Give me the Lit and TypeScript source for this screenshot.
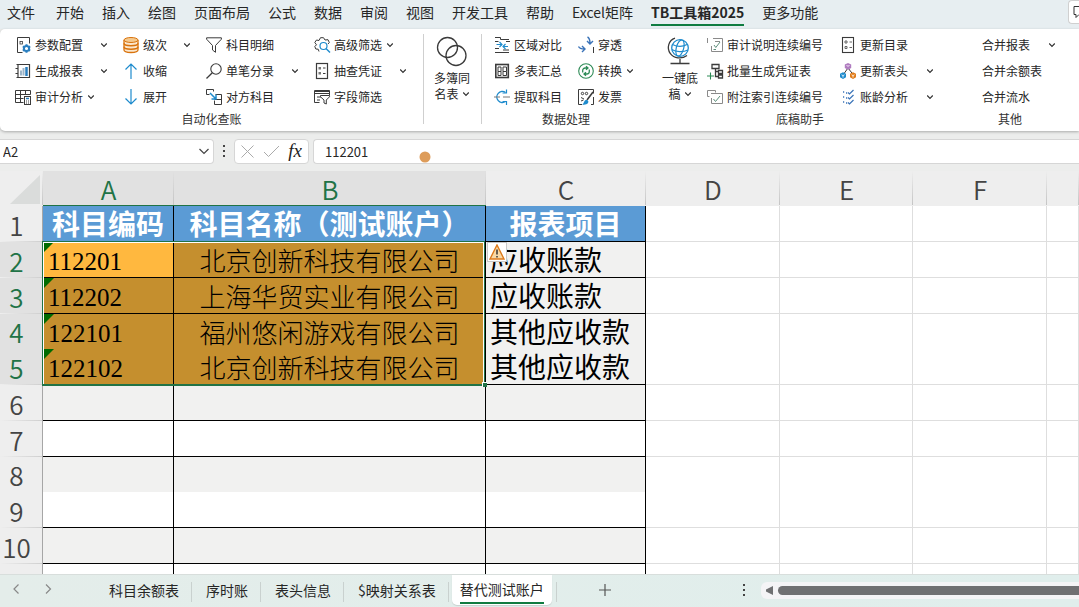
import { LitElement, html, css, svg, nothing, TemplateResult } from "lit";
import { customElement, state } from "lit/decorators.js";
import { classMap } from "lit/directives/class-map.js";

const INK = "#3b3b3b";
const BLUE = "#1e8bcd";

const icons: Record<string, unknown> = {
  config: svg`<path d="M2.500 15.500V.5h12v6M2.500 15.500h5" fill="none" stroke=${INK}/><rect x="5" y="4.500" width="2.500" height="2.500" fill="none" stroke=${INK} stroke-width=".8"/><path d="M11.500 7.200v8.600M7.800 9.400l7.400 4.200M7.800 13.600l7.400-4.200" stroke="#2a7fc0" stroke-width="2"/><circle cx="11.500" cy="11.500" r="2.600" fill="#fff" stroke="#2a7fc0" stroke-width="2"/>`,
  report: svg`<path d="M1.500 1.500h13v13h-13M1.500 1.500h1.500M3 1.500v13M.5 5.500h2.500M.5 10.500h2.500" fill="none" stroke=${INK} stroke-width="1.200"/><path d="M6 7.500v5M8.500 5v7.500" stroke="#9cb4c8" stroke-width="2"/><path d="M11.500 4v9" stroke="#2a7fc0" stroke-width="2.500"/>`,
  audit: svg`<path d="M.5 1.500h15v4M.5 1.500v12h8M.5 5.500h15M.5 9.500h8M5.500 1.500v12M10.500 1.500v4" fill="none" stroke=${INK}/><rect x="9.500" y="7.500" width="6" height="8" fill="#fff" stroke=${INK}/><path d="M11 9.500h3" stroke="#2a7fc0" stroke-width="1.500"/><path d="M11 12h1M13 12h1M11 14h1M13 14h1" stroke=${INK}/>`,
  stack: svg`<path d="M1 3v10c0 3.300 14 3.300 14 0V3" fill="#fbe7cd" stroke="#d9730d" stroke-width="1.300"/><path d="M1 6.300c0 3.300 14 3.300 14 0M1 9.700c0 3.300 14 3.300 14 0" fill="none" stroke="#d9730d" stroke-width="1.500"/><ellipse cx="8" cy="3" rx="7" ry="2.500" fill="#f5c98d" stroke="#d9730d"/>`,
  up: svg`<path d="M8 16V1M2.500 6.500L8 1l5.500 5.500" fill="none" stroke=${BLUE} stroke-width="1.200"/>`,
  down: svg`<path d="M8 0v15M2.500 9.500L8 15l5.500-5.500" fill="none" stroke=${BLUE} stroke-width="1.200"/>`,
  funnel: svg`<path d="M.6.800h14.800v1.400L9.500 8.500v6.800L6.500 13V8.500L.6 2.200z" fill="none" stroke=${INK}/>`,
  search: svg`<circle cx="10" cy="6" r="5.200" fill="none" stroke=${INK} stroke-width="1.100"/><path d="M6.300 9.700L.5 15.500" stroke=${INK} stroke-width="1.300"/>`,
  swap: svg`<path d="M.5 5.500v-5h7v2M.5 5.500h3M9.500 5.500h6v10h-7v-4M8.500 10.500h7" fill="none" stroke=${INK}/><path d="M4 4l5.500 5.500M10 5.500v4.500H5.500" fill="none" stroke=${BLUE} stroke-width="1.500"/>`,
  gearSearch: svg`<path d="M5 14.500L4.200 12.200 1.800 12 .8 9.500 2.500 7.800.8 5.500 2.500 3l2.500.5L6.500.700h3L11 3l3-.3L15.300 5.500 14 7" fill="none" stroke=${INK}/><circle cx="9.500" cy="9" r="3.500" fill="none" stroke=${BLUE} stroke-width="1.200"/><path d="M12 11.500l4 4" stroke=${BLUE} stroke-width="1.500"/>`,
  list: svg`<rect x="2.500" y=".5" width="11" height="15" fill="none" stroke=${INK} stroke-width="1.200"/><rect x="4.500" y="4" width="2.500" height="2.500" fill="#777"/><rect x="4.500" y="9" width="2.500" height="2.500" fill="#777"/><path d="M9 5h2.500M9 10.500h2.500" stroke=${INK}/>`,
  tableFilter: svg`<path d="M5.500 13.500H.5v-12h15v5M.5 4.500h15M.5 2.500h15M3 8h4M3 11h3" fill="none" stroke=${INK}/><path d="M6.500 6.500h9v1.300L12.300 11v4l-2.300-1v-3L6.500 7.800z" fill="#fff" stroke=${INK}/>`,
  circles: svg`<circle cx="10.500" cy="10.500" r="10" fill="none" stroke=${INK} stroke-width="1.300"/><circle cx="19" cy="18.500" r="10" fill="none" stroke=${INK} stroke-width="1.300"/>`,
  compare: svg`<path d="M1 .5h5.500v2H15M1 4.500h3.500M12 4.500h4M1 11.500h4M1 15.500h14M9 13h6" fill="none" stroke=${INK}/><path d="M2.500 7.500h5M5.500 5l2.500 2.500L5.500 10M14 9.500H9M11.500 7L9 9.500l2.500 2.500" fill="none" stroke=${BLUE} stroke-width="1.200"/>`,
  grid: svg`<rect x="1.800" y="1.500" width="12.500" height="13" fill="none" stroke=${INK} stroke-width="1.600"/><path d="M4 4h3v4.500H4zM9 4h3.500v4.500H9zM4 8.500v4h3v-4M9 8.500v4h3.500v-4" fill="none" stroke=${INK}/>`,
  extract: svg`<path d="M11.500 3.500A5.500 5.500 0 1 0 11.500 12.500" fill="none" stroke=${BLUE} stroke-width="1.400"/><path d="M8.500 4h4V.5M8.500 12.500h4V16" fill="none" stroke=${BLUE} stroke-width="1.200"/><path d="M0 8h6M9 8h7" stroke="#777"/>`,
  drill: svg`<path d="M9.500 0c2 1 2.500 3 2.500 6.500M9 4l3 3 3-3M.5 9.500c1 2 3 2.500 6 2.500M4 9l3 3-3 3" fill="none" stroke="#3a73b8" stroke-width="1.400"/><path d="M15.500 10v6" stroke=${INK}/>`,
  convert: svg`<circle cx="8" cy="8" r="7.300" fill="none" stroke="#2e8b57" stroke-width="1.100"/><path d="M4.700 9.500V7.500A2.500 2.500 0 0 1 7.200 5H9.500M8 3.200L10 5 8 6.800M11.300 6.500v2A2.500 2.500 0 0 1 8.800 11H6.500M8 9.200L6 11l2 1.800" fill="none" stroke="#2e8b57" stroke-width="1.300"/>`,
  invoice: svg`<path d="M4 15.500H.5V.5h15v4M15.500 8v7.500H13" fill="none" stroke=${INK}/><circle cx="4.500" cy="4.500" r="1.200" fill="none" stroke=${INK}/><circle cx="8.500" cy="4.500" r="1.200" fill="none" stroke=${INK}/><path d="M3 8.500l3 1.500M3 12l2.500-1" stroke=${INK}/><path d="M15 3L9 11" stroke=${INK} stroke-width="1.500"/><path d="M4 15.500c2 0 1.500-4 4-4.500 2-.3 3 1.500 2 3-1 1.500-3.500 2-6 1.500z" fill=${BLUE}/>`,
  globe: svg`<circle cx="13" cy="11" r="8.300" fill="#fff" stroke=${BLUE} stroke-width="1.300"/><ellipse cx="13" cy="11" rx="3.700" ry="8.300" fill="none" stroke=${BLUE} stroke-width="1.200" transform="rotate(15 13 11)"/><path d="M5.500 7.500c4 2 10 2.500 14.500 0M4.800 12.500c4 2.500 11.500 3 16 .5" fill="none" stroke=${BLUE} stroke-width="1.200"/><path d="M8 1.200C1.500 3.500-.5 11 3.200 16.300 7 21.500 14.500 22.500 20 18.500M13 22v4M3.500 26.500h19" fill="none" stroke=${INK} stroke-width="1.300"/>`,
  checkNote: svg`<path d="M.5 1v5M6 1.500h9.500v13H4.500V9M8 4.500h5" fill="none" stroke="#8a8a8a"/><path d="M7 8l1.800 2.500L13 5M6.500 12.500H9" fill="none" stroke="#5d8f7b"/>`,
  orgPlus: svg`<path d="M5 1.500h7v4H5zM8.500 5.500v3M8.500 8.500h3M11.500 7.500h4v3h-4zM11.500 12h4v3h-4zM8.500 8.500v5h3" fill="none" stroke=${INK} stroke-width="1.300"/><path d="M3.500 9.500v7M0 13h7" stroke="#2e8b57" stroke-width="1.100"/>`,
  checkFrame: svg`<path d="M2.500 7.500h-2v-6h8v2M4 4.500h11.500v10H4.500V9" fill="none" stroke="#8a8a8a"/><path d="M6.500 10l2 2.500L13 7" fill="none" stroke="#5d8f7b"/>`,
  toc: svg`<rect x="2.500" y=".5" width="11" height="15" fill="none" stroke=${INK} stroke-width="1.100"/><path d="M5 4h2v2H5zM5 9.500h2v2H5zM9.500 5H12M9.500 10.500H12" fill="none" stroke="#666"/>`,
  cubes: svg`<path d="M8 5L3 12M8 5l5.500 7" stroke=${INK}/><path d="M8 0l3.200 1.600v3.400L8 6.800 4.800 5V1.600z" fill="#b07cc0"/><path d="M3 9.200l3 1.500v3.600L3 16l-3-1.700v-3.600z" fill=${BLUE}/><path d="M13 9.200l3 1.500v3.600L13 16l-3-1.700v-3.600z" fill="#e07b1a"/><path d="M6.500 2.500L8 3.200l1.500-.7M1.500 11.800l1.500.8 1.500-.8M3 12.600v2M11.500 11.800l1.500.8 1.500-.8M13 12.600v2" fill="none" stroke="#fff" stroke-width=".8"/>`,
  checks: svg`<path d="M8 3.500L9.500 5l4-4M8 8.500l1.500 1.500 4-4M8 13.500L9.500 15l4-4" fill="none" stroke="#3a73b8" stroke-width="1.200"/><path d="M3 3h1.200M6 4h1.200M3 8h1.200M6 9h1.200M3 13h1.200M6 14h1.200" stroke="#3a73b8" stroke-width="1.300"/>`,
};

const chevron = html`<svg class="chev" viewBox="0 0 8 8" width="8" height="8" aria-hidden="true"><path d="M1.200 2.500L4 5.300l2.800-2.800" fill="none" stroke="#333" stroke-width="1.200"/></svg>`;

interface Cmd { icon?: string; label: string; menu?: "inline" | "split"; }
interface Big { icon: string; lines: [string, string]; w: number; h: number; }
interface Group { name: string; label: string; columns: (Cmd[] | Big)[]; }

const groups: Group[] = [
  {
    name: "g-audit", label: "自动化查账",
    columns: [
      [{ icon: "config", label: "参数配置", menu: "split" }, { icon: "report", label: "生成报表", menu: "split" }, { icon: "audit", label: "审计分析", menu: "inline" }],
      [{ icon: "stack", label: "级次", menu: "split" }, { icon: "up", label: "收缩" }, { icon: "down", label: "展开" }],
      [{ icon: "funnel", label: "科目明细" }, { icon: "search", label: "单笔分录", menu: "split" }, { icon: "swap", label: "对方科目" }],
      [{ icon: "gearSearch", label: "高级筛选", menu: "inline" }, { icon: "list", label: "抽查凭证", menu: "split" }, { icon: "tableFilter", label: "字段筛选" }],
    ],
  },
  { name: "g-books", label: "", columns: [{ icon: "circles", lines: ["多簿同", "名表"], w: 30, h: 30 }] },
  {
    name: "g-data", label: "数据处理",
    columns: [
      [{ icon: "compare", label: "区域对比" }, { icon: "grid", label: "多表汇总" }, { icon: "extract", label: "提取科目" }],
      [{ icon: "drill", label: "穿透" }, { icon: "convert", label: "转换", menu: "inline" }, { icon: "invoice", label: "发票" }],
    ],
  },
  {
    name: "g-draft", label: "底稿助手",
    columns: [
      { icon: "globe", lines: ["一键底", "稿"], w: 26, h: 30 },
      [{ icon: "checkNote", label: "审计说明连续编号" }, { icon: "orgPlus", label: "批量生成凭证表" }, { icon: "checkFrame", label: "附注索引连续编号" }],
      [{ icon: "toc", label: "更新目录" }, { icon: "cubes", label: "更新表头", menu: "split" }, { icon: "checks", label: "账龄分析", menu: "split" }],
    ],
  },
  {
    name: "g-other", label: "其他",
    columns: [[{ label: "合并报表", menu: "split" }, { label: "合并余额表" }, { label: "合并流水" }]],
  },
];

@customElement("ribbon-bar")
class RibbonBar extends LitElement {
  static styles = css`
    :host { display: block; }
    .ribbon { display: flex; height: 102px; background: #fff; border-radius: 5px 0 0 5px; box-shadow: 0 1px 3px rgba(0, 0, 0, 0.28); overflow: hidden; }
    .group { flex: none; display: flex; flex-direction: column; box-sizing: border-box; padding-top: 3px; }
    .cols { display: grid; height: 78px; padding: 0 0 0 12px; column-gap: 15px; justify-content: start; }
    .label { margin: 0; font-size: 12px; font-weight: 400; line-height: 18px; text-align: center; color: #333; }
    .g-audit { width: 423px; }
    .g-audit .cols { grid-template-columns: 93px 68px 93px 93px; padding-left: 15px; }
    .g-books { width: 57px; }
    .g-books .cols { padding-left: 9px; }
    .rule { flex: none; width: 1px; margin: 5px 0 7px; background: #cfcfcf; }
    .g-data { width: 168px; }
    .g-data .cols { grid-template-columns: 69px 60px; }
    .g-draft { width: 300px; }
    .g-draft .cols { grid-template-columns: 36px 123px 94px; column-gap: 10px; padding-left: 11px; }
    .g-other { width: 120px; }
    .g-other .cols { grid-template-columns: 74px; padding-left: 32px; }
    .col { display: grid; grid-template-rows: repeat(3, 26px); }
    button { font: inherit; color: inherit; background: none; border: 0; padding: 0; margin: 0; }
    .cmd { display: flex; align-items: center; gap: 4px; font-size: 12px; line-height: 18px; white-space: nowrap; text-align: left; }
    .icon { flex: none; display: block; overflow: visible; }
    .chev { flex: none; display: block; }
    .split .chev { margin-left: auto; }
    .big { display: flex; flex-direction: column; align-items: center; font-size: 12px; line-height: 16px; width: 38px; padding-top: 5px; white-space: nowrap; }
    .big .icon { margin-bottom: 3px; }
    .line { display: flex; align-items: center; gap: 3px; }
  `;

  private column(c: Cmd[] | Big): TemplateResult {
    if (!Array.isArray(c)) {
      return html`<button class="big">
        <svg class="icon" width=${c.w} height=${c.h} viewBox="0 0 ${c.w} ${c.h}" aria-hidden="true">${icons[c.icon]}</svg>
        <span class="line">${c.lines[0]}</span><span class="line">${c.lines[1]}${chevron}</span>
      </button>`;
    }
    return html`<div class="col">${c.map((b) => html`
      <button class=${classMap({ cmd: true, split: b.menu === "split" })}>
        ${b.icon ? html`<svg class="icon" width="16" height="16" viewBox="0 0 16 16" aria-hidden="true">${icons[b.icon]}</svg>` : nothing}
        <span>${b.label}</span>${b.menu ? chevron : nothing}
      </button>`)}</div>`;
  }

  render() {
    return html`<div class="ribbon">${groups.map((g, i) => html`
      <section class="group ${g.name}">
        <div class="cols">${g.columns.map((c) => this.column(c))}</div>
        ${g.label ? html`<h2 class="label">${g.label}</h2>` : nothing}
      </section>${i < 2 ? html`<span class="rule"></span>` : nothing}`)}</div>`;
  }
}

interface Row { a?: string; b?: string; c?: string; }
const rows: Row[] = [
  { a: "科目编码", b: "科目名称（测试账户）", c: "报表项目" },
  { a: "112201", b: "北京创新科技有限公司", c: "应收账款" },
  { a: "112202", b: "上海华贸实业有限公司", c: "应收账款" },
  { a: "122101", b: "福州悠闲游戏有限公司", c: "其他应收款" },
  { a: "122102", b: "北京创新科技有限公司", c: "其他应收款" },
  {}, {}, {}, {}, {}, {},
];

@customElement("sheet-grid")
class SheetGrid extends LitElement {
  static styles = css`
    :host { display: block; position: relative; overflow: hidden; background: #fff; }
    table { width: 100%; table-layout: fixed; border-collapse: separate; border-spacing: 0; }
    th, td { box-sizing: border-box; padding: 0; font-weight: 400; white-space: nowrap; }
    .c-n { width: 43px; } .c-a { width: 131px; } .c-b { width: 312px; } .c-c { width: 160px; }
    .c-d, .c-f { width: 134px; } .c-e { width: 133px; }
    thead th { height: 35px; background: linear-gradient(#eeeeee00, #c4c4c4) right / 1px 100% no-repeat #eee; color: #444; font-size: 26px; font-weight: 350; padding-top: 2px; line-height: 32px; border-bottom: 1px solid #eee; }
    thead .on { background-color: #e1e1e1; color: #217346; border-color: #217346; }
    .corner svg { display: block; margin: 0 0 0 10px; }
    .num { border-right: 1px solid #a6a6a6; background: linear-gradient(90deg, #eee, #cfcfcf) bottom / 100% 1px no-repeat #eee; color: #444; font-size: 26px; font-weight: 350; line-height: 35px; height: 36px; }
    .num span { display: block; margin-right: 9px; height: 35px; }
    .num.on { background-color: #e1e1e1; color: #217346; }
    td { border-right: 1px solid #dedede; border-bottom: 1px solid #dedede; height: 36px; }
    .joined .num { height: 35px; background-image: none; }
    .joined td { height: 35px; border-bottom: 0; }
    .box { border-color: #000; font-family: "Liberation Sans", "Noto Sans CJK SC", sans-serif; font-size: 28px; padding-top: 5px; line-height: 30px; color: #000; }
    .band .box { background: #f1f1f0; }
    .title .box { background: #5b9bd5; color: #fff; font-weight: 700; text-align: center; }
    .band .code, .band .name { background: #c58f2e; font-size: 26px; }
    .band .code { position: relative; font-family: "Liberation Serif", serif; font-size: 25px; padding-left: 5px; }
    .band .active { background: #ffb83f; }
    .code::before { content: ""; position: absolute; left: 1px; top: 0; border-top: 10px solid #006b00; border-right: 10px solid transparent; }
    .name { text-align: center; font-family: "Liberation Sans", "Noto Sans CJK SC Light", "Noto Sans CJK SC", sans-serif; font-weight: 300; }
    .item { padding-left: 4px; }
    .selection { position: absolute; left: 42px; top: 70px; width: 443px; height: 145px; box-sizing: border-box; border: 1px solid #217346; border-bottom-width: 2px; box-shadow: inset 1px 1px #fff, inset -1px 0 #fff; pointer-events: none; }
    .handle { position: absolute; right: -3px; bottom: -3px; width: 4px; height: 4px; background: #217346; border: 1px solid #fff; border-width: 1px 0 0 1px; }
    .warn { position: absolute; left: 487px; top: 71px; width: 20px; height: 20px; padding: 0; border: 1px solid #c8c8c8; background: #fff; }
    .warn svg { display: block; margin: 1px; }
  `;

  render() {
    return html`
      <table>
        <colgroup><col class="c-n" /><col class="c-a" /><col class="c-b" /><col class="c-c" /><col class="c-d" /><col class="c-e" /><col class="c-f" /><col /></colgroup>
        <thead><tr>
          <th class="corner"><svg width="31" height="29" viewBox="0 0 31 29" aria-hidden="true"><path d="M30 0v29H0z" fill="#dadcdb"/></svg></th>
          <th class="on">A</th><th class="on">B</th><th>C</th><th>D</th><th>E</th><th>F</th><th></th>
        </tr></thead>
        <tbody>${rows.map((r, i) => {
          const n = i + 1;
          const filled = n > 1 && n < 6;
          return html`<tr class=${classMap({ title: n === 1, band: filled || n % 2 === 0, joined: n === 4 || n === 8 })}>
            <th class=${classMap({ num: true, on: filled })}><span>${n < rows.length ? n : nothing}</span></th>
            <td class=${classMap({ box: true, code: filled, active: n === 2 })}>${r.a}</td>
            <td class=${classMap({ box: true, name: filled })}>${r.b}</td>
            <td class=${classMap({ box: true, item: filled })}>${r.c}</td>
            <td></td><td></td><td></td><td></td>
          </tr>`;
        })}</tbody>
      </table>
      <div class="selection"><span class="handle"></span></div>
      <button class="warn" aria-label="错误提示"><svg width="16" height="16" viewBox="0 0 16 16"><path d="M8 1L15 15H1z" fill="#f9d9a6" stroke="#dd7a1c" stroke-width="1.400"/><path d="M8 5.500v5M8 12v1.500" stroke="#333" stroke-width="1.500"/></svg></button>
    `;
  }
}

@customElement("app-root")
class AppRoot extends LitElement {
  @state() private menu = "TB工具箱2025";
  @state() private sheet = "替代测试账户";

  static styles = css`
    :host { display: flex; flex-direction: column; height: 100vh; overflow: hidden; background: #ecedec; color: #262626; font-family: "Noto Sans CJK SC", "Noto Sans", sans-serif; font-size: 13px; }
    button, input { font: inherit; color: inherit; background: none; border: 0; padding: 0; margin: 0; outline: none; }
    .top { flex: none; display: flex; align-items: stretch; height: 29px; background: #e7eef1; padding-left: 7px; }
    .menu { display: flex; gap: 18px; flex: 1; min-width: 0; overflow: hidden; font-size: 14px; }
    .menu button { height: 26px; line-height: 24px; white-space: nowrap; box-sizing: border-box; border-bottom: 2px solid transparent; }
    .menu button:first-child { margin-right: 3px; }
    .menu .on { font-weight: 700; border-color: #107c41; }
    .comment { flex: none; width: 11px; height: 24px; background: #fff; border: 1px solid #d0d0d0; border-right: 0; border-radius: 4px 0 0 4px; box-sizing: border-box; overflow: hidden; }
    .comment svg { display: block; margin-left: 4px; }
    .formula { flex: none; position: relative; display: flex; align-items: center; height: 40px; }
    .field { box-sizing: border-box; height: 25px; background: #fff; border: 1px solid #d6d6d6; border-radius: 4px; display: flex; align-items: center; }
    .name-box { width: 214px; border-left: 0; border-radius: 0 4px 4px 0; padding: 0 3px; }
    .name-box input { flex: 1; min-width: 0; }
    .dots { width: 20px; display: flex; justify-content: center; }
    .tools { width: 75px; justify-content: space-between; padding: 0 6px 0 5px; }
    .tools svg, .dots svg { display: block; }
    .fx { font-family: "Liberation Serif", serif; font-style: italic; font-size: 19px; line-height: 22px; color: #222; }
    .value { flex: 1; margin-left: 4px; border-right: 0; border-radius: 4px 0 0 4px; padding-left: 11px; }
    .value input { width: 100%; }
    .pointer { position: absolute; left: 419px; top: 20px; width: 12px; height: 12px; }
    sheet-grid { flex: 1; min-height: 0; }
    .sheets { flex: none; display: flex; height: 33px; box-sizing: border-box; border-top: 1px solid #d8dedc; background: linear-gradient(90deg, #e4edea, #e0eeec); font-size: 14px; }
    .arrows { display: flex; align-items: center; width: 96px; box-sizing: border-box; padding: 0 0 4px 11px; gap: 22px; }
    .tab { padding: 0 13px; height: 30px; line-height: 30px; white-space: nowrap; background: linear-gradient(#c9d1cf, #c9d1cf) right 7px / 1px 20px no-repeat; border-right: 1px solid transparent; }
    .tab.on { background: #fff; border: 0; border-radius: 0 0 5px 5px; margin: 0 4px 0 2px; padding: 0 8px; line-height: 26px; box-shadow: 0 1px 1px rgba(0, 0, 0, 0.12); }
    .tab.on span { display: block; height: 28px; box-sizing: border-box; border-bottom: 2px solid #107c41; }
    .add { width: 98px; height: 30px; background: linear-gradient(#c9d1cf, #c9d1cf) left 7px / 1px 20px no-repeat; display: flex; align-items: center; justify-content: center; }
    .spacer { flex: 1 1 85px; max-width: 85px; }
    .scroll { flex: 1; min-width: 0; display: flex; align-items: center; gap: 5px; height: 17px; margin: 7px 0 0 12px; padding-left: 5px; background: #f4f4f6; border-radius: 6px 0 0 6px; }
    .thumb { flex: 1; height: 9px; background: #6f7072; border-radius: 5px 0 0 5px; }
    .more { width: 10px; height: 30px; display: flex; align-items: center; justify-content: center; }
  `;

  private menus = ["文件", "开始", "插入", "绘图", "页面布局", "公式", "数据", "审阅", "视图", "开发工具", "帮助", "Excel矩阵", "TB工具箱2025", "更多功能"];
  private sheetNames = ["科目余额表", "序时账", "表头信息", "$映射关系表", "替代测试账户"];

  private dots = html`<svg width="4" height="14" viewBox="0 0 4 14" aria-hidden="true"><path d="M1 1h2v2H1zM1 6h2v2H1zM1 11h2v2H1z" fill="#444"/></svg>`;

  render() {
    return html`
      <header class="top">
        <nav class="menu">${this.menus.map((m) => html`<button class=${classMap({ on: m === this.menu })} @click=${() => (this.menu = m)}>${m}</button>`)}</nav>
        <button class="comment" aria-label="批注"><svg width="14" height="14" viewBox="0 0 14 14"><path d="M1 1.500h12v8H6L3 12.500v-3H1z" fill="none" stroke="#333"/></svg></button>
      </header>
      <ribbon-bar></ribbon-bar>
      <div class="formula">
        <div class="field name-box"><input aria-label="名称框" .value=${"A2"} />
          <svg width="12" height="12" viewBox="0 0 12 12" aria-hidden="true"><path d="M1.500 4L6 8.500 10.500 4" fill="none" stroke="#444" stroke-width="1.200"/></svg></div>
        <span class="dots">${this.dots}</span>
        <div class="field tools">
          <button aria-label="取消"><svg width="15" height="15" viewBox="0 0 15 15"><path d="M1.500 1.500l12 12M13.500 1.500l-12 12" stroke="#aaa" fill="none"/></svg></button>
          <button aria-label="输入"><svg width="17" height="15" viewBox="0 0 17 15"><path d="M1 8l4.500 4.500L16 2" stroke="#aaa" fill="none"/></svg></button>
          <button class="fx" aria-label="插入函数">fx</button>
        </div>
        <div class="field value"><input aria-label="编辑栏" .value=${"112201"} /></div>
        <svg class="pointer" viewBox="0 0 12 12" aria-hidden="true"><circle cx="6" cy="6" r="5.500" fill="#dd9c5a"/></svg>
      </div>
      <sheet-grid></sheet-grid>
      <footer class="sheets">
        <div class="arrows">
          <button aria-label="上一个"><svg width="10" height="12" viewBox="0 0 10 12"><path d="M7.500 1.500L3 6l4.500 4.500" fill="none" stroke="#888" stroke-width="1.200"/></svg></button>
          <button aria-label="下一个"><svg width="10" height="12" viewBox="0 0 10 12"><path d="M3 1.500L7.500 6 3 10.500" fill="none" stroke="#888" stroke-width="1.200"/></svg></button>
        </div>
        ${this.sheetNames.map((s) => html`<button class=${classMap({ tab: true, on: s === this.sheet })} @click=${() => (this.sheet = s)}><span>${s}</span></button>`)}
        <button class="add" aria-label="新建工作表"><svg width="12" height="12" viewBox="0 0 12 12"><path d="M6 0v12M0 6h12" stroke="#555" stroke-width="1.200"/></svg></button>
        <span class="spacer"></span>
        <span class="more">${this.dots}</span>
        <div class="scroll"><svg width="7" height="9" viewBox="0 0 7 9" aria-hidden="true"><path d="M7 0v9L0 5.500v-2z" fill="#6f7072"/></svg><span class="thumb"></span></div>
      </footer>
    `;
  }
}
